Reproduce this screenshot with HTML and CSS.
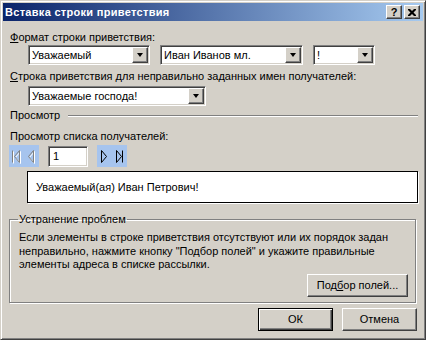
FILE: index.html
```html
<!DOCTYPE html>
<html lang="ru">
<head>
    <meta charset="UTF-8">
    <title>Вставка строки приветствия</title>
    <link rel="stylesheet" href="styles.css">
</head>
<body>

<div class="window">
    <div class="titlebar">
        <span class="title">Вставка строки приветствия</span>
        <div class="cap-buttons">
            <div class="cap-btn raised">?</div>
            <div class="cap-btn raised">
                <svg width="8" height="7" viewBox="0 0 8 7">
                    <path d="M0 0h2l2 2 2-2h2v1l-2.5 2.5 2.5 2.5v1h-2l-2-2-2 2h-2v-1l2.5-2.5-2.5-2.5z" fill="#000"/>
                </svg>
            </div>
        </div>
    </div>

    <div class="content">
        <div class="label"><u>Ф</u>ормат строки приветствия:</div>
        <div class="combo-row">
            <div class="combo sunken combo-salutation">
                <span class="combo-text">Уважаемый</span>
                <span class="drop raised"><i class="arrow"></i></span>
            </div>
            <div class="combo sunken combo-name">
                <span class="combo-text">Иван Иванов мл.</span>
                <span class="drop raised"><i class="arrow"></i></span>
            </div>
            <div class="combo sunken combo-punct">
                <span class="combo-text">!</span>
                <span class="drop raised"><i class="arrow"></i></span>
            </div>
        </div>

        <div class="label label-second"><u>С</u>трока приветствия для неправильно заданных имен получателей:</div>
        <div class="combo sunken combo-fallback">
            <span class="combo-text">Уважаемые господа!</span>
            <span class="drop raised"><i class="arrow"></i></span>
        </div>

        <div class="separator">
            <span>Просмотр</span>
            <span class="sep-line"></span>
        </div>

        <div class="label label-preview">Просмотр списка получателей:</div>
        <div class="nav-row">
            <div class="nav-pair">
                <!-- first / previous: disabled -->
                <svg class="nav-icon" width="15" height="22" viewBox="0 0 15 22">
                    <path d="M3.5 5.5v12M10.5 5.5l-5 6 5 6z" fill="none" stroke="#fff" transform="translate(1 1)"/>
                    <path d="M3.5 5.5v12M10.5 5.5l-5 6 5 6z" fill="none" stroke="#808080"/>
                </svg>
                <svg class="nav-icon" width="15" height="22" viewBox="0 0 15 22">
                    <path d="M9.5 5.5l-5 6 5 6z" fill="none" stroke="#fff" transform="translate(1 1)"/>
                    <path d="M9.5 5.5l-5 6 5 6z" fill="none" stroke="#808080"/>
                </svg>
            </div>
            <div class="record sunken">1</div>
            <div class="nav-pair">
                <!-- next / last -->
                <svg class="nav-icon" width="15" height="22" viewBox="0 0 15 22">
                    <path d="M4.5 5.5l5 6-5 6z" fill="none" stroke="#000"/>
                </svg>
                <svg class="nav-icon" width="15" height="22" viewBox="0 0 15 22">
                    <path d="M4.5 5.5l5 6-5 6zM10.5 5.5v12" fill="none" stroke="#000"/>
                </svg>
            </div>
        </div>

        <div class="preview">Уважаемый(ая) Иван Петрович!</div>

        <fieldset class="group">
            <legend>Устранение проблем</legend>
            <p class="group-text">Если элементы в строке приветствия отсутствуют или их порядок задан неправильно, нажмите кнопку "Подбор полей" и укажите правильные элементы адреса в списке рассылки.</p>
            <div class="group-actions">
                <button class="button raised btn-match">Под<u>б</u>ор полей...</button>
            </div>
        </fieldset>

        <div class="dialog-actions">
            <button class="button btn-default">ОК</button>
            <button class="button raised">Отмена</button>
        </div>
    </div>
</div>

</body>
</html>
```

FILE: styles.css
```css
* {
    margin: 0;
    padding: 0;
    box-sizing: border-box;
}

body {
    background-color: #d4d0c8;
    font-family: "Liberation Sans", Arial, sans-serif;
    font-size: 11px;
    color: #000;
}

u {
    text-decoration: underline;
    text-underline-offset: 1px;
}

.window {
    width: 426px;
    height: 340px;
    border: 1px solid;
    border-color: #d4d0c8 #404040 #404040 #d4d0c8;
    box-shadow: inset 1px 1px #fff, inset -1px -1px #808080;
    padding: 2px;
    display: flex;
    flex-direction: column;
}

/* 3d edges */
.raised {
    background-color: #d4d0c8;
    border: 1px solid;
    border-color: #fff #404040 #404040 #fff;
    box-shadow: inset -1px -1px #808080;
}

.sunken {
    background-color: #fff;
    border: 1px solid;
    border-color: #808080 #fff #fff #808080;
    box-shadow: inset 1px 1px #404040, inset -1px -1px #d4d0c8;
}

.titlebar {
    height: 18px;
    flex-shrink: 0;
    background: linear-gradient(to right, #0a246a, #a6caf0);
    display: flex;
    align-items: center;
    justify-content: space-between;
    padding: 0 3px 0 2px;
}

.title {
    color: #fff;
    font-weight: bold;
    font-size: 11px;
    letter-spacing: 0.3px;
}

.cap-buttons {
    display: flex;
    gap: 2px;
}

.cap-btn {
    width: 16px;
    height: 14px;
    display: flex;
    align-items: center;
    justify-content: center;
    font-weight: bold;
    font-size: 11px;
    line-height: 12px;
}

.content {
    flex: 1;
    display: flex;
    flex-direction: column;
    padding: 10px 6px 0 6px;
}

.label {
    line-height: 13px;
    padding-left: 1px;
}

.label-second {
    margin-top: 5px;
}

.label-preview {
    margin-top: 8px;
}

.combo-row {
    display: flex;
    gap: 10px;
    margin: 1px 0 0 19px;
}

.combo {
    height: 20px;
    display: flex;
    align-items: stretch;
    justify-content: space-between;
    padding: 1px;
}

.combo-text {
    padding-left: 2px;
    line-height: 16px;
}

.drop {
    width: 16px;
    display: flex;
    align-items: center;
    justify-content: center;
}

.arrow {
    width: 0;
    height: 0;
    border-left: 3.5px solid transparent;
    border-right: 3.5px solid transparent;
    border-top: 4px solid #000;
}

.combo-salutation {
    width: 122px;
}

.combo-name {
    width: 143px;
}

.combo-punct {
    width: 62px;
}

.combo-fallback {
    width: 178px;
    margin: 3px 0 0 19px;
}

.separator {
    display: flex;
    align-items: center;
    gap: 8px;
    margin-top: 3px;
    padding-left: 1px;
    line-height: 13px;
    width: 409px;
}

.sep-line {
    flex: 1;
    height: 2px;
    border-top: 1px solid #808080;
    border-bottom: 1px solid #fff;
}

.nav-row {
    display: flex;
    align-items: center;
    gap: 9px;
    margin-top: 2px;
    height: 22px;
}

.nav-pair {
    display: flex;
    background-color: #a6c4ee;
    height: 22px;
}

.nav-icon {
    display: block;
}

.record {
    width: 40px;
    height: 21px;
    padding-left: 4px;
    line-height: 19px;
}

.preview {
    width: 391px;
    height: 32px;
    margin: 4px 0 0 18px;
    background-color: #fff;
    border: 1px solid #000;
    box-shadow: 1px 1px #fff;
    padding-left: 8px;
    line-height: 30px;
}

.group {
    width: 407px;
    margin-top: 10px;
    border: 1px solid #808080;
    box-shadow: inset 1px 1px #fff, 1px 1px #fff;
    padding: 0 7px 5px 9px;
}

.group legend {
    padding: 0 1px;
    margin-left: -1px;
    line-height: 13px;
}

.group-text {
    margin-top: 5px;
    line-height: 13.5px;
}

.group-actions {
    display: flex;
    justify-content: flex-end;
    margin-top: 2px;
}

.button {
    font-family: "Liberation Sans", Arial, sans-serif;
    font-size: 11px;
    color: #000;
    height: 23px;
}

.btn-match {
    width: 101px;
}

.dialog-actions {
    display: flex;
    justify-content: flex-end;
    gap: 9px;
    margin-top: 5px;
}

.dialog-actions .button {
    width: 75px;
}

.btn-default {
    background-color: #d4d0c8;
    border: 1px solid #000;
    box-shadow: inset 1px 1px #fff, inset -1px -1px #404040, inset -2px -2px #808080;
}
```
